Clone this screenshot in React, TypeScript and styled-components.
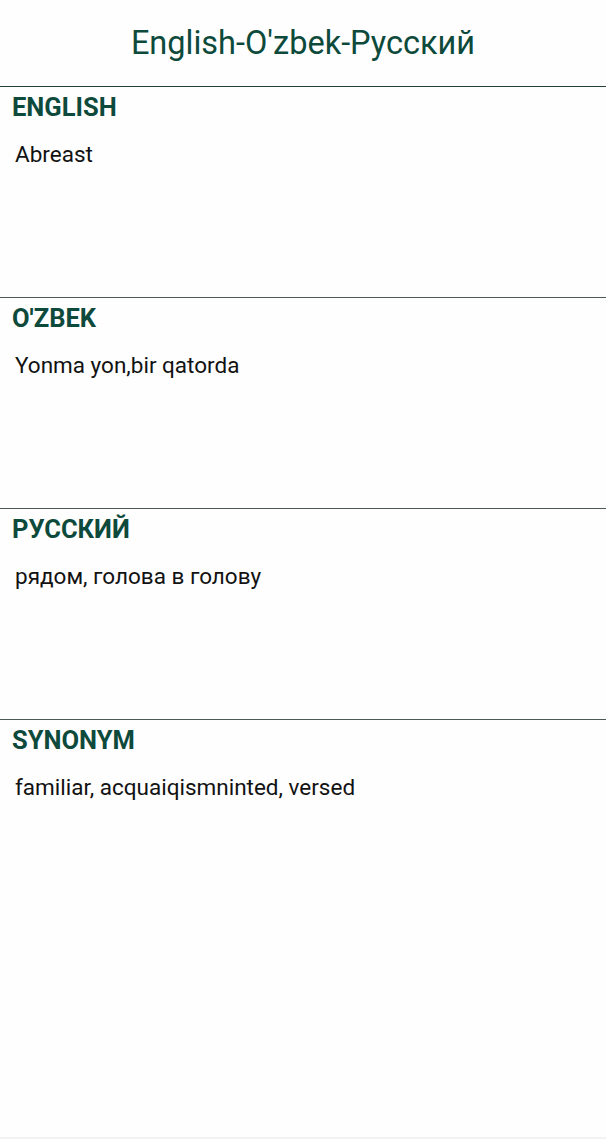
import React from "react";
import styled, { createGlobalStyle } from "styled-components";

const GlobalStyle = createGlobalStyle`
  html, body {
    margin: 0;
    padding: 0;
    background: #fefefe;
  }
  body {
    font-family: Roboto, "Noto Sans", "Liberation Sans", sans-serif;
  }
  *, *::before, *::after {
    box-sizing: border-box;
  }
`;

const Page = styled.div`
  width: 606px;
  height: 1139px;
  display: flex;
  flex-direction: column;
  background: #fefefe;
  border-bottom: 2px solid #f2f2f2;
`;

const Header = styled.header`
  height: 87px;
  display: flex;
  align-items: flex-start;
  justify-content: center;
  border-bottom: 1px solid #24403a;
  flex-shrink: 0;
  padding-top: 25px;
`;

const Title = styled.h1`
  margin: 0;
  font-size: 32.5px;
  line-height: 37px;
  font-weight: 400;
  color: #0d4a3b;
`;

const Section = styled.section<{ $grow?: boolean; $last?: boolean }>`
  height: ${(p) => (p.$grow ? "auto" : "211px")};
  flex: ${(p) => (p.$grow ? "1" : "0 0 auto")};
  border-bottom: ${(p) => (p.$last ? "none" : "1px solid #4a5856")};
  display: flex;
  flex-direction: column;
  padding-top: 6px;
`;

const Heading = styled.h2`
  margin: 0 0 0 12px;
  font-size: 25.5px;
  font-weight: 700;
  color: #0e4a3b;
  line-height: 29px;
`;

const Body = styled.p`
  margin: 19px 0 0 15px;
  font-size: 22.5px;
  font-weight: 400;
  color: #121212;
  line-height: 26px;
`;

const entries = [
  { title: "ENGLISH", text: "Abreast" },
  { title: "O'ZBEK", text: "Yonma yon,bir qatorda" },
  { title: "РУССКИЙ", text: "рядом, голова в голову" },
  { title: "SYNONYM", text: "familiar, acquaiqismninted, versed" },
];

export default function App() {
  return (
    <>
      <GlobalStyle />
      <Page>
        <Header>
          <Title>English-O'zbek-Русский</Title>
        </Header>
        {entries.map((e, i) => (
          <Section key={e.title} $grow={i === entries.length - 1} $last={i === entries.length - 1}>
            <Heading>{e.title}</Heading>
            <Body>{e.text}</Body>
          </Section>
        ))}
      </Page>
    </>
  );
}
